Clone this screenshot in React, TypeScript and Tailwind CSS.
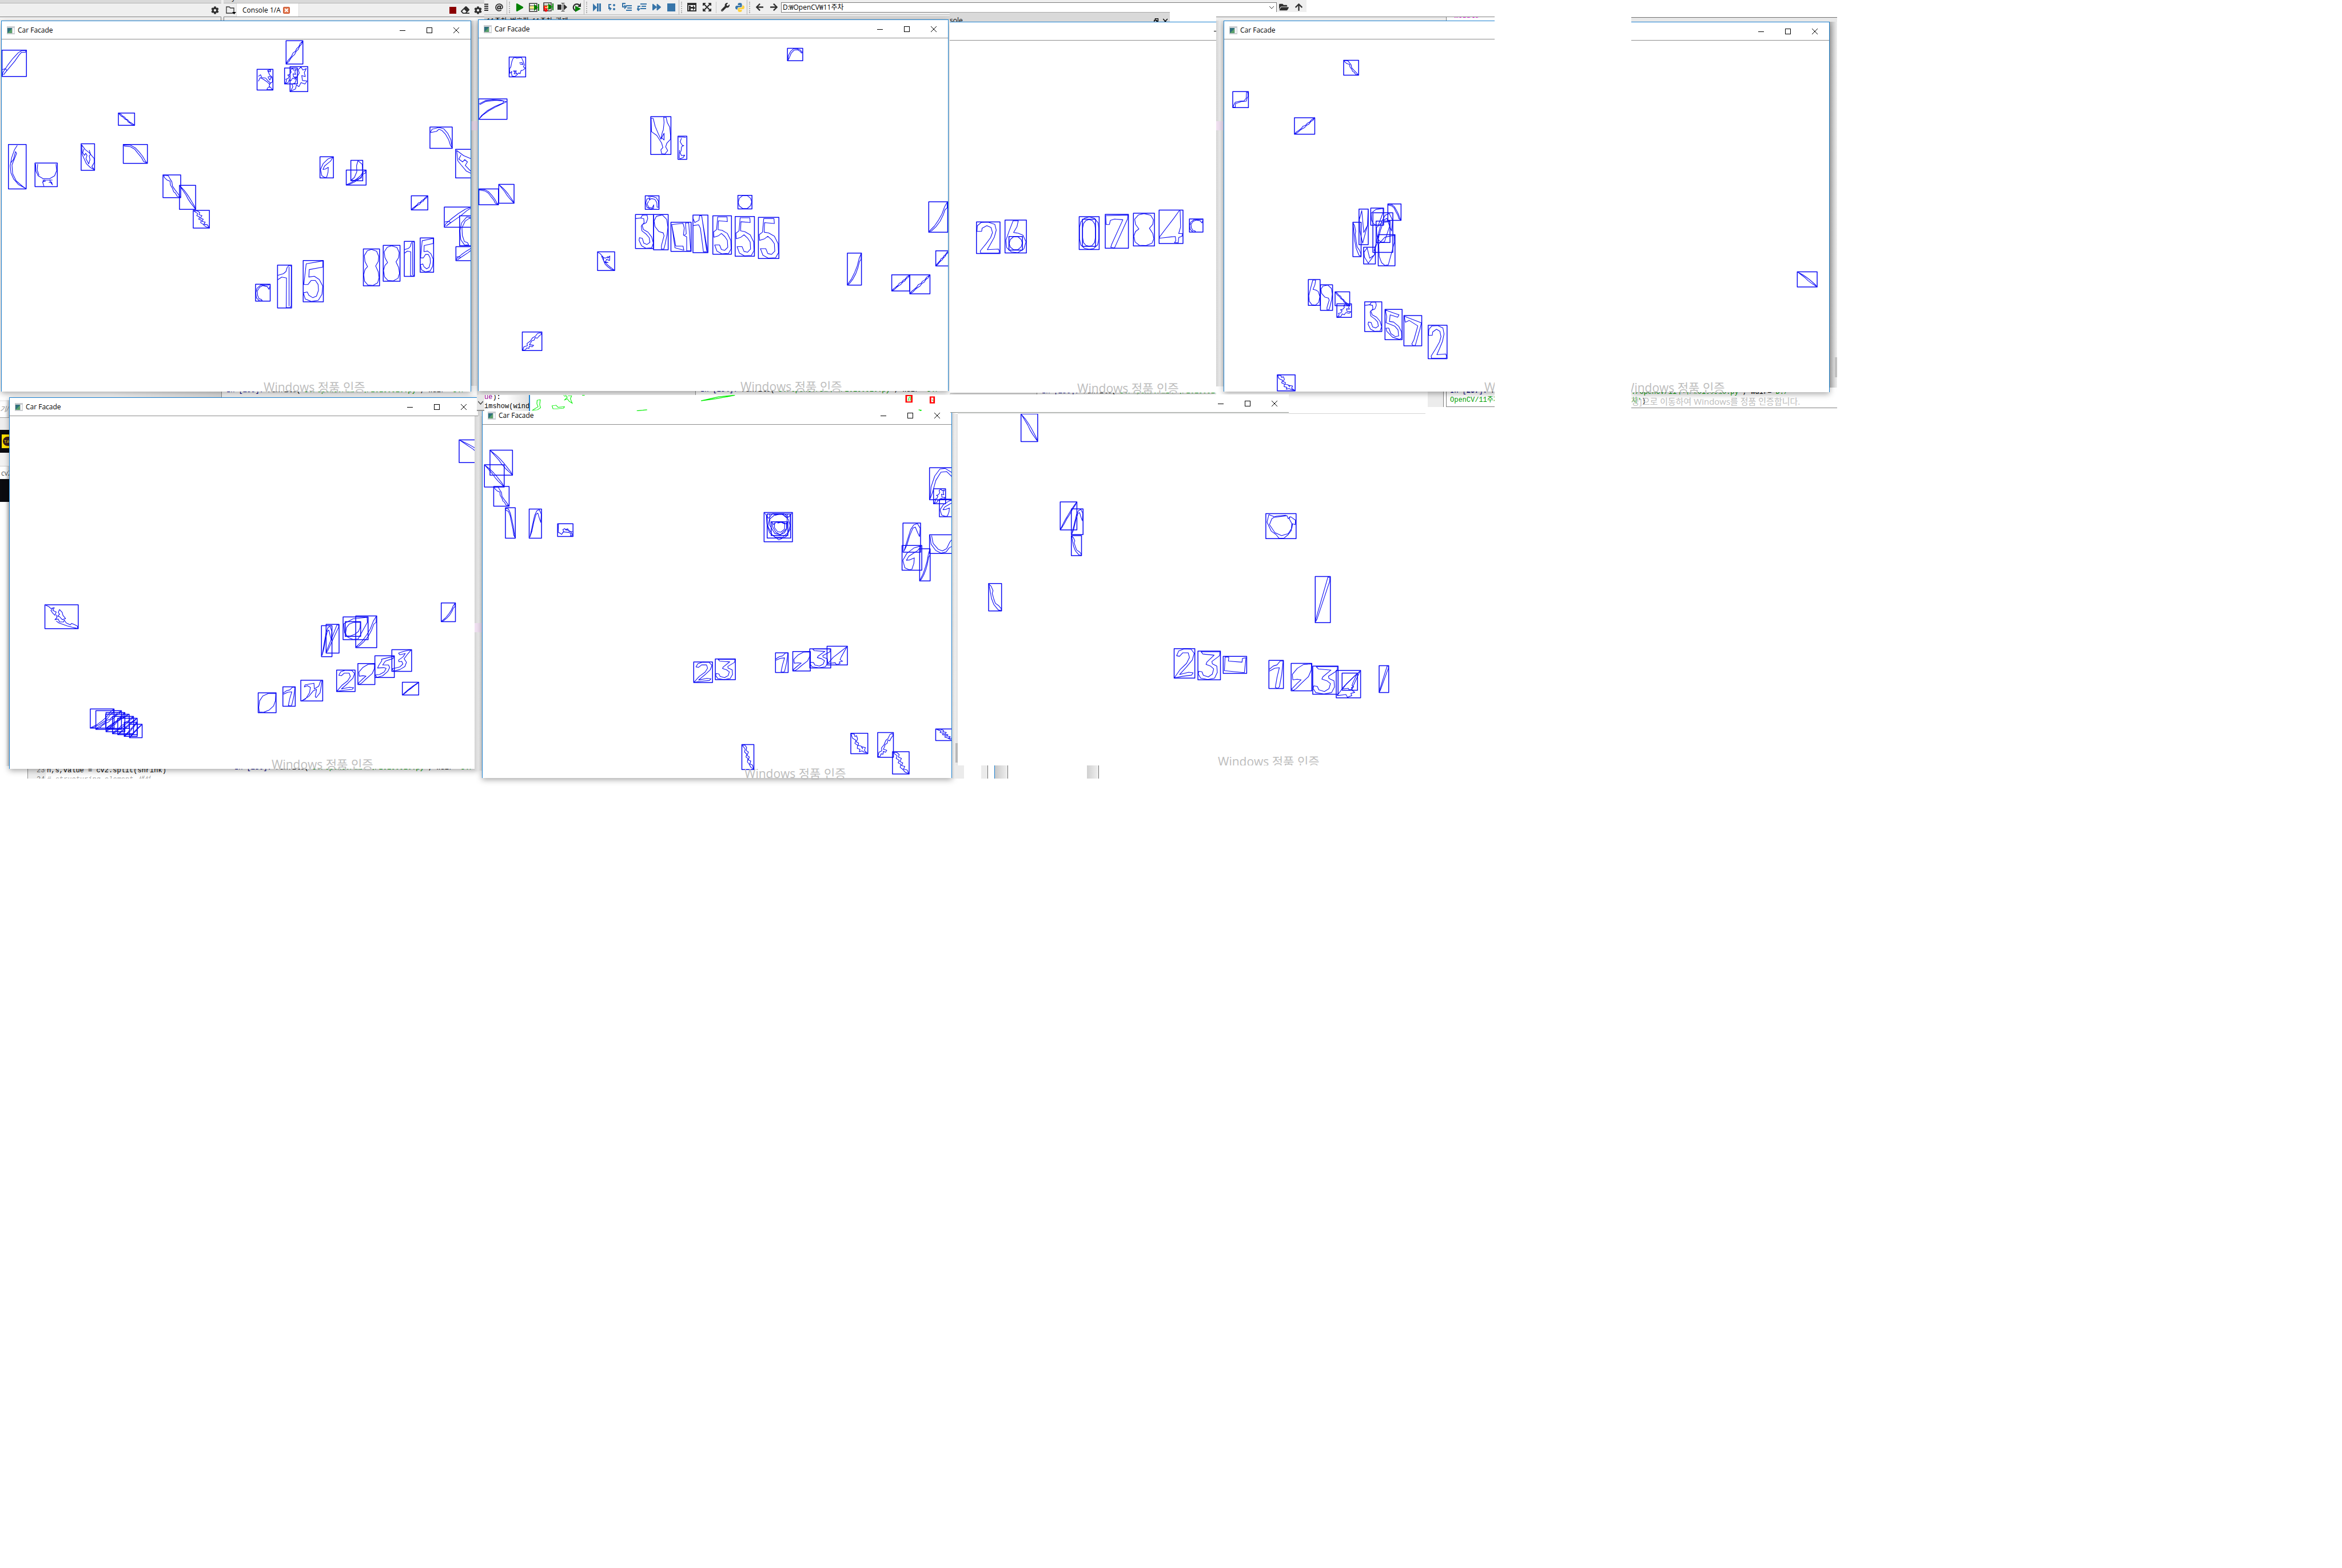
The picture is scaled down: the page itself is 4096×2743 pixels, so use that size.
import type { ReactNode } from "react";
import {
  FaArrowLeft,
  FaArrowRight,
  FaArrowUp,
  FaAt,
  FaCog,
  FaEraser,
  FaFolderOpen,
  FaForward,
  FaPlay,
  FaWrench,
} from "react-icons/fa";

const UI = "font-['Open_Sans','Noto_Sans_CJK_KR',sans-serif]";
const CODE = "font-['Liberation_Mono','Noto_Sans_CJK_KR',monospace] text-xs leading-4 whitespace-pre";

/* Contour traces, each in a 100 x 100 cell that is fitted to its bounding box. */
const T: Record<string, string> = {
  none: "",
  band: "M1 98L4 84L24 56L44 32L66 10L80 2L98 2L96 8L80 8L70 18L52 42L34 62L16 82L6 94M2 74L14 70L20 78L10 88",
  horn: "M2 24L24 8L50 4L78 6L98 14L62 38L36 58L14 80L2 98L10 82L30 58L58 36L86 20L88 10L60 7L26 12L4 28",
  hook: "M88 2L96 4L98 28L90 44L86 60L56 62L34 70L18 74L16 98L2 98L6 86L16 66L44 60L72 58L86 40Z",
  face: "M28 4L40 2L44 6L74 2L84 20L92 40L86 50L98 56L84 66L72 68L66 84L58 80L44 92L34 98L18 96L14 84L16 72L4 82L2 60L10 50L16 24L22 10ZM62 30L78 28L84 38L66 36M26 70L44 70L38 76L48 84L30 84L34 76Z",
  wave: "M6 4L4 66L16 74L26 84L40 60L34 46L46 38L52 48L66 50L80 58L92 74L96 92L84 96L86 76L72 68L54 66L36 64L26 84M50 46L66 40L74 60L98 62",
  barb: "M1 2L16 10L34 30L36 48L54 66L72 80L98 98L80 94L60 80L44 66L34 44L24 24L44 34L62 26L60 34L72 22L70 46L52 40L46 56L62 58L44 52",
  fray: "M2 2L12 8L18 16L28 12L24 24L34 30L30 44L24 36L18 24L24 14M34 42L36 54L30 62L40 60L44 72L56 72L58 64L64 76L76 84L80 78L90 84L98 90L98 99L82 94L66 88L54 82L42 76L34 68M40 32L44 20L52 32L54 44L62 58L52 62L44 50L38 48L44 40Z",
  rise: "M1 99L8 88L20 78L33 66L42 52L55 46L63 34L76 25L84 12L98 2L92 15L80 24L72 38L60 46L50 60L40 66L28 76L16 90Z",
  riseThin: "M1 99L14 82L30 64L44 50L62 32L80 16L98 1L90 12L74 26L56 46L40 60L24 78L10 92Z",
  sweep: "M1 98L30 80L52 60L70 40L84 16L98 1L97 20L86 26L76 44L60 64L38 82L14 96Z",
  lean: "M2 98L4 92L78 8L84 1L97 2L96 10L12 92Z",
  fall: "M1 2L14 8L24 22L38 32L46 48L58 56L68 72L80 80L98 98L84 94L72 82L60 72L52 56L40 50L30 34L16 24Z",
  fallThin: "M1 1L22 22L40 40L54 58L70 74L84 86L99 99L92 86L76 68L62 52L46 36L28 20Z",
  fallBow: "M2 2L30 4L50 18L66 40L80 62L90 84L98 98L84 90L76 70L60 46L48 26L30 12L4 8Z",
  fallSteep: "M4 2L30 4L40 18L50 30L54 50L68 66L82 80L98 98L80 94L70 80L60 74L54 60L42 44L40 28L22 22L8 12Z",
  arcLeft: "M50 2L34 12L18 30L10 48L14 64L30 78L56 90L98 99L80 94L44 82L24 66L20 46L38 28L46 20L40 16L28 34L12 42",
  arcDown: "M2 2L20 10L34 26L28 36L40 56L52 72L76 80L98 92L96 99L74 96L40 76L22 54L12 26Z",
  arcTop: "M2 24L10 10L40 2L62 8L80 30L94 60L99 98L92 86L84 60L70 34L54 16L40 10L30 20L2 26",
  arch: "M2 98L6 60L20 26L40 4L60 2L84 14L98 34M2 98L12 76L24 40L44 14L66 12L84 26L92 38L98 34",
  five: "M15 8L98 1L97 16L30 22L28 40L55 38L80 46L97 62L93 82L75 96L40 99L10 93L1 78L20 76L28 84L48 90L66 86L76 72L74 58L60 48L40 48L24 58L3 58Z",
  fiveB: "M26 3L76 3L78 15L30 13L28 36L50 38L78 46L96 64L98 86L84 98L48 99L22 92L10 76L36 76L46 88L64 90L80 82L78 64L64 54L46 46L30 52L6 56L4 42L20 36Z",
  fiveI: "M34 16L60 10L98 2L94 12L54 24L40 42L70 42L76 54L66 72L40 92L10 99L2 88L24 86L48 74L58 58L46 54L14 56L20 44L36 22Z",
  fiveL: "M2 2L50 12L82 18L74 26L30 18L26 40L50 42L80 56L96 74L98 94L84 99L44 92L10 72L6 62L22 62L34 80L60 90L80 88L76 68L58 56L34 50L6 44L10 24Z",
  one: "M1 24L42 20L60 15L68 6L80 1L98 2L97 95L90 99L62 99L64 30L30 28L2 34M82 4L82 96",
  oneSlim: "M2 32L30 20L56 16L78 2L98 2L88 50L72 94L60 99L44 96L56 60L72 26L40 28L4 38",
  three: "M2 12L30 10L38 2L64 1L68 12L60 24L36 30L44 44L70 52L90 66L99 84L90 98L58 99L34 92L20 76L22 68L38 70L46 84L64 88L80 82L76 68L60 58L36 48L32 34L48 24L46 12L24 10",
  threeS: "M14 2L98 2L96 16L62 36L64 44L84 52L86 74L74 94L44 99L12 94L2 80L4 70L18 72L24 84L46 90L64 80L70 62L56 52L36 46L40 38L72 14L22 10Z",
  threeI: "M34 16L60 8L98 1L80 20L62 42L74 58L66 78L40 92L8 99L2 88L14 86L40 80L56 66L50 54L36 56L34 48L56 34L68 18L40 24Z",
  two: "M2 30L4 12L20 2L50 1L78 8L84 26L76 48L60 70L46 88L94 86L98 96L92 99L18 99L16 92L40 70L60 50L68 34L62 18L44 12L24 20L22 30Z",
  twoS: "M12 24L22 8L48 1L82 2L97 16L88 38L60 62L26 88L70 80L92 82L84 90L40 94L1 99L30 70L60 50L74 30L68 14L42 14L26 26Z",
  seven: "M2 4L98 2L96 14L46 90L40 99L24 97L28 88L76 16L40 14L22 18L18 30L4 30Z",
  sevenL: "M2 2L98 24L90 44L64 98L52 99L44 94L56 80L78 34L30 16L8 22Z",
  nine: "M20 5L60 1L90 14L98 36L92 58L78 86L70 98L54 98L54 88L72 60L66 52L36 48L10 34L4 18Z",
  nineI: "M30 18L60 4L98 2L97 24L84 48L50 72L24 92L10 99L2 94L30 72L48 60L30 58L8 60L6 40Z",
  four: "M84 2L62 24L2 80L2 84L50 80L68 79L70 92L64 97L80 98L82 82L96 78L98 70L82 70L90 50L88 2Z",
  fourI: "M98 2L70 26L30 60L4 92L40 88L46 98L64 92L60 84L76 80L64 72L70 56L98 2",
  six: "M38 2L62 2L56 20L40 38L62 40L84 46L98 66L88 88L60 99L30 97L8 84L4 62L20 32Z",
  eight: "M50 1L82 6L95 20L92 34L76 46L92 62L97 78L88 92L60 99L28 98L8 88L2 70L10 56L26 48L10 34L6 18L24 5Z",
  zero: "M50 1L76 5L94 18L98 34L98 68L92 86L72 97L50 99L26 96L8 86L2 68L2 32L8 16L26 5Z",
  zeroI: "M98 3L96 40L86 66L62 86L30 98L6 96L3 74L8 40L26 16L56 4Z",
  circle: "M34 2L66 2L90 22L98 48L90 76L66 97L34 97L10 78L2 52L10 22Z",
  ring: "M96 4L70 6L36 4L10 24L2 50L6 80L24 97L46 98L40 90L24 86L14 66L12 40L28 18L50 8L80 14L92 30L98 12",
  swirl: "M20 6L50 4L80 14L96 40L98 84L86 84L84 50L70 26L46 20L28 32L36 14L12 24L4 52L12 84L40 98L60 92L62 66L50 90L24 84L14 60L24 40",
  leaf: "M60 2L96 20L99 54L88 86L30 98L4 96L30 84L50 56L48 26Z",
  branch: "M4 98L16 80L10 70L28 66L36 50L24 44L40 40L52 26L46 12L62 2L72 14L92 8L80 24L86 40L66 36L70 56L96 58L84 70L62 64L50 80L36 74L30 90Z",
  branchR: "M8 34L22 26L30 40L54 42L72 58L82 64L80 74L66 62L40 48L20 40L8 58M64 6L86 2L84 12L68 8L80 28L94 36L98 60L82 68L76 82L88 90L98 98L62 98L66 90L80 84M72 34L90 38L80 52L68 36",
  crag: "M1 2L20 4L24 16L34 12L40 28L32 42L46 48L44 60L60 62L70 76L64 66L86 70L80 84L96 96L78 92L66 86L50 90L54 78L38 74L40 58L24 50L30 34L10 24Z",
  cragDown: "M4 4L24 2L40 12L36 24L54 30L44 44L62 50L54 62L74 66L66 78L88 82L98 98L76 92L60 78L46 70L50 56L34 50L40 38L22 30L28 18Z",
  cragUp: "M2 98L8 80L26 74L24 62L40 50L52 32L66 24L78 8L94 4L98 12L88 20L76 34L66 30L60 44L48 48L42 60L36 68L58 72L50 80L36 76L34 88L22 86L16 96Z",
  vee: "M2 4L12 5L22 26L38 46L50 60L58 40L62 36L66 16L64 2L76 2L82 16L94 28L98 50L98 60L80 70L74 80L84 90L70 99L54 98L50 88L60 82L54 70L30 50L4 40ZM50 60L66 44L66 62L54 56",
  bowl: "M3 4L4 34L14 54L36 66L66 66L88 54L97 32L94 4M12 4L10 30L18 52M34 72L78 72M44 70L34 80L40 98M34 80L48 76M66 70L70 82L78 92L74 80L62 82",
  ubend: "M2 4L6 50L24 84L44 98L64 92L76 70L88 60L98 30M8 4L14 46L34 78L50 86L66 74L78 40L98 4",
  tee: "M2 10L12 20L40 14L44 2L58 2L98 98L70 98L50 36L38 26L2 28M60 6L92 96",
  hangul: "M4 8L60 4L66 20L62 44L78 50L78 98L98 98L88 2L72 3L76 40L66 44M4 8L24 82L60 82L64 96L20 88Z",
  hangulS: "M4 99L22 90L40 60L44 34L30 26L16 32L20 22L60 14L62 42L82 28L90 4L97 2L88 60L70 84L66 78L72 44L58 50L36 78Z",
  bracket: "M24 4L22 28L80 34L82 12L97 8L90 96L5 84L8 4L24 4",
  lens: "M96 2L97 24L60 97L40 99L20 90L6 70L3 30L40 8Z",
  fold: "M2 22L8 60L40 96L97 40L98 4L92 46L52 66L30 4L4 30Z",
  shell: "M4 4L30 22L60 34L97 56L98 70L80 86L98 98L70 90L40 76L20 54L8 40ZM20 20L12 34L26 44L34 36L44 44L36 56L46 66L56 76L66 60L60 46L70 40L60 24",
  wisp: "M6 4L60 4L90 6M40 8L24 24L50 40L66 40L40 46L36 62L24 72L40 84L76 82L60 92L24 98L14 94L18 60",
  loop: "M6 96L24 60L44 22L62 6L82 2L98 18L94 46L84 34L70 14L56 18L38 44L22 76Z",
  curl: "M96 2L60 10L24 32L4 60L14 90L36 98L50 96L60 72L62 50L40 58L22 60L34 44L60 30L80 20Z",
  cup: "M8 8L10 40L28 76L52 94L78 82L92 56L92 6M20 6L20 44L38 72L58 76L80 54L82 6M2 2L16 20L30 4L70 4L86 16L98 2M38 10L60 4L84 18",
  halo: "M10 4L32 14L70 8L74 20L82 12L98 26L97 44L86 40L84 68L74 84L60 98L44 99L34 84L18 70L4 34ZM20 20L34 10L66 6M20 20L12 44L30 76L52 88L74 80L86 58L88 44L78 22L78 12",
};

type Mark = [number, number, number, number, string];

function Traces({ view, marks }: { view: [number, number, number, number]; marks: Mark[] }) {
  const [x0, y0, x1, y1] = view;
  return (
    <svg
      className="block h-full w-full"
      viewBox={`${x0} ${y0} ${x1 - x0} ${y1 - y0}`}
      preserveAspectRatio="none"
      fill="none"
      stroke="#0c0cf4"
      strokeLinejoin="round"
      aria-hidden="true"
    >
      {marks.map(([a, b, c, d, shape], i) => (
        <g key={i}>
          <rect x={a} y={b} width={c - a} height={d - b} strokeWidth="1.5" vectorEffect="non-scaling-stroke" />
          <path
            d={T[shape]}
            transform={`translate(${a} ${b}) scale(${(c - a) / 100} ${(d - b) / 100})`}
            strokeWidth="1.1"
            vectorEffect="non-scaling-stroke"
          />
        </g>
      ))}
    </svg>
  );
}

const facade1: Mark[] = [
  [7, 197, 87, 300, "band"], [937, 160, 992, 251, "rise"], [842, 272, 894, 353, "branchR"],
  [932, 267, 974, 329, "branch"], [950, 261, 1008, 359, "branch"], [388, 443, 441, 491, "fall"],
  [28, 566, 86, 740, "arcLeft"], [115, 639, 188, 731, "bowl"], [266, 563, 310, 667, "shell"],
  [404, 566, 483, 640, "fallBow"], [534, 685, 592, 774, "fallSteep"], [588, 726, 641, 820, "fallThin"],
  [633, 824, 686, 893, "cragDown"], [1048, 614, 1092, 697, "curl"], [1149, 628, 1188, 708, "leaf"],
  [1134, 666, 1199, 725, "sweep"], [1347, 767, 1401, 822, "rise"], [1408, 498, 1481, 581, "arcTop"],
  [1492, 585, 1580, 697, "shell"], [1455, 811, 1560, 890, "band"], [1505, 845, 1570, 962, "ring"],
  [1493, 966, 1570, 1021, "band"], [837, 1113, 885, 1179, "ring"], [909, 1038, 955, 1206, "one"],
  [993, 1020, 1059, 1182, "five"], [1190, 975, 1243, 1119, "eight"], [1255, 961, 1310, 1101, "eight"],
  [1324, 945, 1357, 1082, "one"], [1376, 932, 1420, 1066, "five"],
];

const facade2: Mark[] = [
  [115, 225, 169, 303, "face"], [1025, 191, 1075, 240, "arch"], [15, 389, 108, 469, "horn"],
  [578, 458, 644, 606, "vee"], [667, 535, 696, 625, "wisp"], [16, 741, 80, 803, "fallBow"],
  [81, 723, 131, 797, "fallThin"], [560, 768, 605, 821, "swirl"], [863, 766, 909, 819, "circle"],
  [528, 841, 587, 974, "three"], [587, 841, 635, 979, "nine"], [644, 871, 710, 985, "hangul"],
  [716, 843, 765, 990, "tee"], [781, 846, 842, 996, "fiveB"], [854, 849, 917, 1004, "fiveB"],
  [930, 852, 997, 1013, "fiveB"], [404, 987, 460, 1060, "barb"], [1221, 992, 1267, 1117, "sweep"],
  [1366, 1077, 1425, 1140, "rise"], [1425, 1077, 1491, 1151, "rise"], [1487, 791, 1549, 910, "sweep"],
  [1510, 983, 1552, 1042, "rise"], [158, 1300, 222, 1373, "cragUp"],
];

const facade3: Mark[] = [
  [92, 851, 158, 972, "two"], [172, 844, 232, 970, "six"], [183, 907, 221, 959, "circle"],
  [380, 831, 436, 957, "zero"], [389, 841, 426, 945, "zero"], [453, 822, 518, 952, "seven"],
  [532, 818, 591, 943, "eight"], [604, 806, 671, 934, "four"], [689, 840, 727, 890, "ring"],
];

const facade4: Mark[] = [
  [1122, 231, 1164, 288, "fallSteep"], [811, 351, 855, 412, "hook"], [984, 451, 1041, 514, "rise"],
  [1246, 781, 1283, 844, "fallBow"], [1165, 801, 1191, 937, "fold"], [1198, 797, 1234, 863, "lens"],
  [1204, 815, 1260, 967, "loop"], [1213, 847, 1252, 929, "lens"], [1148, 851, 1171, 983, "arcDown"],
  [1178, 947, 1211, 1011, "fold"], [1219, 899, 1266, 1018, "lens"], [1023, 1071, 1056, 1170, "six"],
  [1057, 1091, 1091, 1189, "nine"], [1098, 1118, 1139, 1171, "fall"], [1103, 1164, 1144, 1216, "branch"],
  [1181, 1156, 1229, 1270, "three"], [1238, 1185, 1286, 1301, "fiveL"], [1291, 1209, 1341, 1325, "sevenL"],
  [1359, 1246, 1412, 1374, "two"], [936, 1436, 986, 1497, "crag"],
];

const facade5: Mark[] = [[1396, 1018, 1474, 1075, "fallThin"]];

const facade6: Mark[] = [
  [1489, 197, 1600, 288, "fallThin"], [147, 858, 255, 954, "fray"], [1431, 851, 1477, 926, "sweep"],
  [1043, 942, 1077, 1066, "loop"], [1058, 937, 1100, 1052, "lean"], [1113, 907, 1194, 998, "lens"],
  [1120, 926, 1170, 985, "zeroI"], [1154, 903, 1222, 1030, "sweep"], [1271, 1038, 1335, 1125, "threeI"],
  [1216, 1063, 1279, 1150, "fiveI"], [1161, 1094, 1216, 1178, "nineI"], [1092, 1120, 1152, 1206, "twoS"],
  [976, 1161, 1047, 1244, "hangulS"], [918, 1187, 958, 1265, "oneSlim"], [838, 1211, 896, 1291, "zeroI"],
  [1305, 1169, 1358, 1220, "riseThin"], [294, 1276, 371, 1353, "sweep"], [312, 1283, 395, 1358, "rise"],
  [345, 1290, 406, 1367, "rise"], [344, 1297, 420, 1354, "riseThin"], [366, 1306, 434, 1375, "rise"],
  [383, 1313, 446, 1379, "riseThin"], [404, 1329, 446, 1386, "rise"], [421, 1337, 462, 1391, "riseThin"],
];

const facade7: Mark[] = [
  [52, 242, 125, 342, "fallThin"], [34, 300, 98, 389, "fallThin"], [64, 387, 114, 466, "fallSteep"],
  [102, 472, 134, 594, "fallBow"], [179, 477, 219, 594, "loop"], [271, 536, 321, 587, "wave"],
  [940, 491, 1032, 608, "cup"], [950, 497, 1026, 593, "circle"], [963, 528, 1017, 583, "cup"],
  [1476, 312, 1560, 440, "arch"], [1489, 396, 1528, 456, "branch"], [1508, 438, 1560, 508, "curl"],
  [1390, 533, 1447, 650, "loop"], [1387, 623, 1451, 722, "curl"], [1444, 636, 1478, 765, "sweep"],
  [1476, 580, 1560, 655, "ubend"], [712, 1089, 773, 1171, "twoS"], [782, 1077, 847, 1160, "threeS"],
  [977, 1052, 1018, 1131, "oneSlim"], [1033, 1047, 1090, 1125, "nineI"], [1088, 1036, 1156, 1113, "threeS"],
  [1144, 1026, 1210, 1101, "fourI"], [868, 1419, 907, 1519, "cragDown"], [1221, 1374, 1276, 1456, "crag"],
  [1308, 1371, 1359, 1470, "cragUp"], [1356, 1448, 1410, 1537, "cragDown"], [1496, 1357, 1560, 1403, "cragDown"],
];

const facade8: Mark[] = [
  [235, 94, 289, 205, "fallThin"], [362, 447, 416, 559, "riseThin"], [398, 475, 436, 578, "loop"],
  [398, 582, 431, 662, "arcDown"], [130, 774, 172, 884, "arcDown"], [1028, 494, 1126, 594, "halo"],
  [1188, 746, 1237, 931, "lean"], [731, 1035, 798, 1153, "twoS"], [808, 1045, 881, 1160, "threeS"],
  [890, 1066, 966, 1134, "bracket"], [1038, 1082, 1085, 1195, "oneSlim"], [1110, 1094, 1177, 1204, "nineI"],
  [1180, 1105, 1262, 1218, "threeS"], [1256, 1122, 1335, 1232, "fourI"], [1275, 1133, 1325, 1202, "fourI"],
  [1395, 1103, 1426, 1211, "lean"],
];

function AppIcon() {
  return (
    <svg className="h-4 w-4" viewBox="0 0 16 16" aria-hidden="true">
      <rect x="1" y="1" width="14" height="14" fill="#c9ccd0" />
      <rect x="2" y="4" width="8" height="9" fill="#2f6f7c" />
      <path d="M2 13L10 5V13Z" fill="#5aa06a" />
      <rect x="11" y="4" width="3" height="9" fill="#f4f6f8" />
    </svg>
  );
}

function Controls() {
  const cell = "flex h-full w-[47px] items-center justify-center";
  return (
    <div className="flex h-full pr-0.5">
      <button className={cell} aria-label="Minimize">
        <svg width="10" height="10" stroke="#000" aria-hidden="true"><path d="M0 5.5H10" /></svg>
      </button>
      <button className={cell} aria-label="Maximize">
        <svg width="10" height="10" fill="none" stroke="#000" aria-hidden="true"><rect x=".5" y=".5" width="9" height="9" /></svg>
      </button>
      <button className={cell} aria-label="Close">
        <svg width="10" height="10" stroke="#000" aria-hidden="true"><path d="M0 0L10 10M10 0L0 10" /></svg>
      </button>
    </div>
  );
}

function Watermark({ place }: { place: string }) {
  return (
    <p className={`pointer-events-none absolute ${place} ${UI} text-[21px] leading-6 whitespace-nowrap text-[#bdbdbd]`}>
      Windows 정품 인증
    </p>
  );
}

function FacadeWindow({
  frame, title = true, controls = true, mark, children,
}: {
  frame: string; title?: boolean; controls?: boolean; mark?: string; children: ReactNode;
}) {
  return (
    <section
      className={`absolute flex flex-col border-[#1a80d0] bg-white shadow-[0_3px_10px_rgba(0,0,0,0.35)] ${frame}`}
      aria-label="Car Facade"
    >
      <header className="flex h-8 shrink-0 items-center justify-between border-b border-[#8c8c8c] pl-2">
        {title ? (
          <div className="flex items-center gap-1">
            <AppIcon />
            <h2 className={`${UI} text-xs leading-4 whitespace-nowrap text-black`}>Car Facade</h2>
          </div>
        ) : (
          <span />
        )}
        {controls && <Controls />}
      </header>
      <div className="min-h-0 flex-1">{children}</div>
      {mark && <Watermark place={mark} />}
    </section>
  );
}

function RunLine({ n, tail = "20190910.py" }: { n: string; tail?: string }) {
  return (
    <p className={`${CODE} text-black`}>
      <span className="text-[#000080]">In [<b>{n}</b>]:</span> runfile(
      <span className="text-[#00a000]">'D:/OpenCV/11주차/{tail}'</span>, wdir=
      <span className="text-[#00a000]">'D:/</span>
    </p>
  );
}

function Tool({ label, wide, children }: { label: string; wide?: boolean; children: ReactNode }) {
  return (
    <button
      aria-label={label}
      className={`flex h-full shrink-0 items-center justify-center ${wide ? "w-[26px]" : "w-[25px]"}`}
    >
      {children}
    </button>
  );
}

function Grip() {
  return (
    <div className="flex h-full shrink-0 items-center gap-[3px] pr-1">
      <span className="h-full w-px bg-[#b4b4b4]" />
      <span className="h-5 border-l-2 border-dotted border-[#b0b0b0]" />
    </div>
  );
}

const blue = "#3775a9";

function Toolbar() {
  return (
    <div className="absolute top-0 left-[847px] flex h-[26px] w-[1438px] items-center border-b border-[#b4b4b4] bg-[#efefef] text-[#2f2f2f]">
      <button aria-label="Outline" className="w-2 shrink-0">
        <svg width="8" height="14" stroke="#2f2f2f" strokeWidth="2" aria-hidden="true"><path d="M0 1.5H7M0 5H7M0 8.500H7M0 12H7" /></svg>
      </button>
      <button aria-label="Find symbols" className="flex w-[31px] shrink-0 justify-center pl-1"><FaAt size={14} /></button>
      <Grip />
      <Tool label="Run file"><FaPlay size={14} color="#008000" /></Tool>
      <Tool label="Run cell">
        <svg width="18" height="16" aria-hidden="true">
          <path d="M1 1H14V15H1Z" fill="#fff" stroke="#333" strokeWidth="1.500" /><path d="M1 5H14V11H1Z" fill="#fbf08a" stroke="#333" />
          <path d="M9 2L16 8L9 14ZM16 2H18V14H16Z" fill="#008000" />
        </svg>
      </Tool>
      <Tool label="Run cell and advance">
        <svg width="18" height="17" aria-hidden="true">
          <path d="M1 1H14V15H1Z" fill="#fff" stroke="#333" strokeWidth="1.500" /><path d="M1 5H14V11H1Z" fill="#fbf08a" stroke="#333" />
          <path d="M9 2L16 8L9 14ZM16 2H18V14H16Z" fill="#008000" />
          <path d="M7 7.500H2V13.500H5M4 10.500L7 13.500L4 16.500" fill="none" stroke="#f00" strokeWidth="2" />
        </svg>
      </Tool>
      <Tool label="Run selection">
        <svg width="17" height="15" fill="#2f2f2f" aria-hidden="true"><path d="M0 3H7V12H0ZM11 2L17 7.500L11 13Z" /><path d="M6.500 .5H12.500M6.500 14.500H12.500M9.500 .5V14.500" stroke="#2f2f2f" /></svg>
      </Tool>
      <Tool label="Re-run last script">
        <svg width="16" height="16" aria-hidden="true"><path d="M7 14A6 6 0 1 1 13 5" fill="none" stroke="#2f2f2f" strokeWidth="2.200" /><path d="M15 0V7H9Z" fill="#2f2f2f" /><path d="M5 5L15 10.500L5 16Z" fill="#008000" /></svg>
      </Tool>
      <Grip />
      <Tool wide label="Debug file"><svg width="14" height="14" fill={blue} aria-hidden="true"><path d="M0 0L7 7L0 14ZM7 0H10V14H7ZM11 0H14V14H11Z" /></svg></Tool>
      <Tool wide label="Step"><svg width="14" height="14" fill={blue} aria-hidden="true"><path d="M6 1H1V10H3V13L7 9L3 6V8H3V3H6Z" /><circle cx="11" cy="3" r="2" /><circle cx="11" cy="10" r="2" /></svg></Tool>
      <Tool wide label="Step into"><svg width="17" height="15" fill="none" stroke={blue} strokeWidth="2" aria-hidden="true"><path d="M6 1H1V7H5M7 5H17M9 9H17M7 13H17M4 4L7 7L4 10" /></svg></Tool>
      <Tool wide label="Step return"><svg width="17" height="15" fill="none" stroke={blue} strokeWidth="2" aria-hidden="true"><path d="M6 2H17M8 6H16M6 10H16M6 6H2V13M0 10L2.500 13L5 10" /></svg></Tool>
      <Tool wide label="Continue"><FaForward size={15} color={blue} /></Tool>
      <Tool wide label="Stop"><span className="h-3.5 w-3.5 bg-[#3775a9]" /></Tool>
      <Grip />
      <Tool wide label="Maximize pane">
        <svg width="16" height="15" aria-hidden="true"><path d="M1 1H15V14H1Z" fill="#fff" stroke="#2f2f2f" strokeWidth="2" /><path d="M1 1H15V4H1ZM3 5H6V13H3Z" fill="#2f2f2f" /><path d="M6 7H10V4L14 9L10 13V10H6Z" fill="#2f2f2f" /></svg>
      </Tool>
      <Tool wide label="Fullscreen">
        <svg width="15" height="15" fill="#2f2f2f" stroke="#2f2f2f" aria-hidden="true"><path d="M2 2L13 13M13 2L2 13" strokeWidth="2" /><path d="M.5.5H5L.5 5ZM14.500.5V5L10 .5ZM.5 14.500V10L5 14.500ZM14.500 14.500H10L14.500 10Z" /></svg>
      </Tool>
      <span className="mx-[3px] h-5 w-px shrink-0 bg-[#c8c8c8]" />
      <Tool label="Preferences"><FaWrench size={15} /></Tool>
      <Tool label="Python path">
        <svg width="16" height="16" viewBox="0 0 16 16" aria-hidden="true">
          <path d="M8 0C5 0 4.500 1 4.500 2.500V4H8.500V5H2.500C.8 5 0 6.500 0 8.300C0 10.300 1 11.500 2.500 11.500H3.800V9.500C3.800 8.200 5 7.500 6 7.500H10C11 7.500 11.500 6.500 11.500 5.500V2.500C11.500 .8 10 0 8 0Z" fill={blue} />
          <path d="M8 16C11 16 11.500 15 11.500 13.500V12H7.500V11H13.500C15.200 11 16 9.500 16 7.700C16 5.700 15 4.500 13.500 4.500H12.200V6.500C12.200 7.800 11 8.500 10 8.500H6C5 8.500 4.500 9.500 4.500 10.500V13.500C4.500 15.200 6 16 8 16Z" fill="#ffd23f" />
        </svg>
      </Tool>
      <Grip />
      <Tool label="Back"><FaArrowLeft size={15} /></Tool>
      <Tool label="Forward"><FaArrowRight size={15} /></Tool>
      <div className="flex h-[18px] min-w-0 flex-1 items-center border border-[#7a7a7a] bg-white pr-1">
        <input
          aria-label="Working directory"
          className={`${UI} h-4 w-full min-w-0 px-0.5 text-xs leading-4 text-black outline-none`}
          defaultValue="D:₩OpenCV₩11주차"
        />
        <svg width="8" height="6" fill="none" stroke="#333" aria-hidden="true"><path d="M0 1L4 5L8 1" /></svg>
      </div>
      <button aria-label="Browse directory" className="flex w-6 shrink-0 justify-center"><FaFolderOpen size={17} /></button>
      <button aria-label="Parent directory" className="flex w-7 shrink-0 justify-center"><FaArrowUp size={15} /></button>
    </div>
  );
}

function ConsoleTabs() {
  return (
    <div className="absolute top-0 left-0 flex h-9 w-[847px] gap-1 overflow-hidden bg-[#efefef] text-[#2f2f2f]">
      <div className="flex w-[387px] flex-col">
        <div className="h-1.5 shrink-0 border-b border-[#b4b4b4] bg-[#d9d9d9]" />
        <div className="flex h-6 shrink-0 items-center justify-end border-b border-[#808080] pr-1">
          <button aria-label="Editor options"><FaCog size={14} /></button>
        </div>
        <div className="h-2 border-r border-[#808080] bg-[#f6f6f6]" />
      </div>
      <div className="flex flex-1 flex-col">
        <div className="h-1.5 shrink-0 overflow-hidden border-b border-[#b4b4b4] bg-[#d9d9d9]">
          <p className={`-mt-2.5 pl-1 ${UI} text-xs leading-3 text-black`}>IPython console</p>
        </div>
        <div className="flex h-6 shrink-0 items-center border-b border-[#808080] pl-1">
          <button aria-label="Browse tabs">
            <svg width="18" height="15" fill="none" stroke="#2f2f2f" strokeWidth="1.300" aria-hidden="true"><path d="M1 13V2H6L8 4H14V13Z" /><path d="M11 11H18L14.500 15Z" fill="#000" stroke="none" /></svg>
          </button>
          <div className="flex h-full w-[110px] items-center gap-1 border-x border-[#dcdcdc] bg-white pl-2.5">
            <span className={`${UI} text-xs leading-4 whitespace-nowrap text-black`}>Console 1/A</span>
            <button aria-label="Close tab" className="flex h-3 w-3 shrink-0 items-center justify-center rounded-[2px] border border-[#c8502c] bg-[#e07850]">
              <svg width="6" height="6" stroke="#fff" strokeWidth="2" aria-hidden="true"><path d="M0 0L6 6M6 0L0 6" /></svg>
            </button>
          </div>
          <div className="flex flex-1 items-center justify-end gap-2 pr-1">
            <button aria-label="Interrupt kernel" className="h-3 w-3 bg-[#8b0000]" />
            <button aria-label="Clear console"><FaEraser size={15} /></button>
            <button aria-label="Console options"><FaCog size={14} /></button>
          </div>
        </div>
        <div className="h-2 border-l border-[#808080] bg-[#f8f8f8]" />
      </div>
    </div>
  );
}

function Gap({ place, note }: { place: string; note: string }) {
  return (
    <div className={`absolute overflow-hidden bg-gradient-to-r from-[#d2d2d2] via-[#eeeeee] to-[#e2e2e2] ${place}`}>
      <div className={`absolute h-4 w-full bg-[#efdff0] ${note}`} />
    </div>
  );
}

export default function App() {
  return (
    <main className="relative min-h-screen w-full overflow-hidden bg-white">
      <ConsoleTabs />
      <Toolbar />
      {/* dock title below the toolbar, cut off by the windows */}
      <div className="absolute top-[27px] left-[847px] h-2 w-[814px] overflow-hidden bg-[#d9d9d9]">
        <p className={`mt-0.5 pl-1 ${UI} text-xs leading-4 text-black`}>11주차_번호판_11주차_과제</p>
      </div>
      <div className="absolute top-[21px] left-[1661px] h-[19px] w-[630px] overflow-hidden bg-white">
        <div className="flex h-5 w-[385px] items-start justify-between border-t border-[#a8a8a8] bg-[#d9d9d9] pt-1.5">
          <p className={`${UI} text-xs leading-4 text-black`}>sole</p>
          <div className="flex gap-2 pt-1 pr-1">
            <button aria-label="Undock"><svg width="8" height="9" fill="none" stroke="#000" aria-hidden="true"><path d="M2.500 3V.5H7.500V5H5M.5 3.500H5V8.500H.5Z" strokeWidth="1.500" /></svg></button>
            <button aria-label="Close pane"><svg width="8" height="9" stroke="#000" strokeWidth="1.500" aria-hidden="true"><path d="M0 1L8 9M8 1L0 9" /></svg></button>
          </div>
        </div>
      </div>

      <div className="absolute top-[29px] left-[2127px] flex h-2 w-[487px] justify-end overflow-hidden border-t border-[#808080] bg-[#ececec]">
        <p className={`-mt-2.5 w-[85px] border-l border-[#808080] bg-white pl-1.5 ${CODE} text-[#e000e0]`}>{"<module>"}</p>
      </div>
      <div className="absolute top-[30px] left-[2853px] h-2 w-[360px] border-t border-[#707070] bg-[#e8e8e8]" />
      <div className="absolute top-[38px] left-[3200px] h-[675px] w-[13px] bg-gradient-to-r from-[#b8b8b8] to-[#efefef]">
        <div className="absolute top-[587px] right-0 h-[35px] w-1 bg-[#c2c2c2]" />
      </div>

      <Gap place="left-[824px] top-[36px] h-[660px] w-[13px]" note="top-[176px]" />
      <Gap place="left-[2127px] top-[36px] h-[650px] w-[13px]" note="top-[176px]" />

      {/* console lines that show between the rows of windows */}
      <div className="absolute top-[675px] left-0 flex h-5 w-[834px] overflow-hidden bg-white">
        <div className="w-[388px] shrink-0 border-r border-[#909090] bg-gradient-to-r from-white via-white to-[#e4e4e4]" />
        <div className="flex-1 pl-2"><RunLine n="255" /></div>
      </div>
      <div className="absolute top-[674px] left-[837px] flex h-[17px] w-[824px] overflow-hidden bg-white">
        <div className="w-[380px] shrink-0 border-r border-[#909090] bg-[#f0f0f0]" />
        <div className="flex-1 pl-2"><RunLine n="254" /></div>
      </div>
      <div className="absolute top-[677px] left-[1662px] flex h-[15px] w-[465px] overflow-hidden bg-white">
        <div className="w-[152px] shrink-0 border-r border-[#909090] bg-[#f0f0f0]" />
        <div className="flex-1 pl-2"><RunLine n="256" /></div>
      </div>

      <FacadeWindow frame="left-[2px] top-[36px] h-[649px] w-[822px] border-x border-t" mark="left-[458px] -bottom-[4px]">
        <Traces view={[6, 155, 1541, 1533]} marks={facade1} />
      </FacadeWindow>
      <FacadeWindow frame="left-[836px] top-[34px] h-[650px] w-[823px] border-x border-t" mark="left-[458px] -bottom-[4px]">
        <Traces view={[15, 152, 1550, 1531]} marks={facade2} />
      </FacadeWindow>

      <div className="absolute top-[38px] left-[1661px] h-[653px] w-[466px] overflow-hidden">
        <FacadeWindow frame="left-0 top-0 h-[649px] w-[466px] border-t" title={false} controls={false} mark="left-[223px] -bottom-[4px]">
          <Traces view={[17, 157, 764, 1505]} marks={facade3} />
        </FacadeWindow>
        <span className="absolute top-[16px] right-0 h-px w-1 bg-black" />
      </div>

      {/* fourth screenshot, left part */}
      <div className="absolute top-[36px] left-[2127px] h-[680px] w-[487px] overflow-hidden">
        <div className="absolute right-0 bottom-0 flex h-10 w-full flex-row justify-end bg-white pb-1">
          <div className="w-7 border-r border-[#808080] bg-[#ececec]" />
          <div className="ml-1 w-[85px] border-b border-l border-[#808080] pl-1.5">
            <p className={`${CODE} text-black`}><span className="text-[#000080]">In [<b>257</b>]:</span> runfile</p>
            <p className={`${CODE} text-[#00a000]`}>OpenCV/11주차</p>
          </div>
        </div>
        <FacadeWindow frame="left-[13px] top-0 h-[649px] w-[822px] border-l border-t" controls={false} mark="left-[455px] -bottom-[4px]">
          <div className="h-full w-[474px]"><Traces view={[787, 151, 1547, 1500]} marks={facade4} /></div>
        </FacadeWindow>
      </div>
      {/* fourth screenshot, right part */}
      <div className="absolute top-[38px] left-[2853px] h-[679px] w-[360px] overflow-hidden">
        <div className="absolute bottom-[3px] left-0 h-9 w-[360px] border-b border-[#808080] bg-white">
          <div className="-ml-[144px]"><RunLine n="257" /></div>
          <p className={`${CODE} text-[#00a000]`}>차'<span className="text-black">)</span></p>
          <p className={`absolute top-[14px] left-0 ${UI} text-[15px] leading-5 whitespace-nowrap text-[#bdbdbd]`}>정]으로 이동하여 Windows를 정품 인증합니다.</p>
        </div>
        <FacadeWindow frame="right-[13px] top-0 h-[648px] w-[347px] border-r border-t" title={false} mark="-left-[14px] -bottom-[4px]">
          <Traces view={[744, 152, 1521, 1469]} marks={facade5} />
        </FacadeWindow>
      </div>

      {/* slice of the desktop left of the lower window */}
      <div className="absolute top-[700px] left-0 flex h-[650px] w-[17px] flex-col overflow-hidden bg-white shadow-[inset_-4px_0_4px_rgba(0,0,0,0.2)]">
        <p className={`h-[30px] pt-2 ${UI} text-xs leading-4 text-[#909090] italic`}>기/</p>
        <div className="h-[22px] border-t border-[#a0a0a0] bg-[#eeeeee]" />
        <div className="flex h-10 items-center justify-end bg-[#0b0b10]">
          <div className="flex h-6 w-3.5 items-center overflow-hidden bg-[#ffe000] pl-0.5">
            <span className={`block h-4 w-6 shrink-0 rounded-full bg-[#3b1e1e] pl-0.5 ${UI} text-[8px] leading-4 text-[#ffe000]`}>TALK</span>
          </div>
        </div>
        <div className="h-6 border-b border-[#cccccc] bg-[#f2f2f2]" />
        <p className={`h-[22px] pl-0.5 ${UI} text-xs leading-6 text-[#555]`}>cv2</p>
        <div className="h-10 bg-[#0b0b10]" />
      </div>

      {/* editor lines below the lower window */}
      <div className="absolute top-[1340px] left-0 flex h-[22px] w-[830px] overflow-hidden bg-white">
        <div className="ml-12 w-8 shrink-0 border-l border-[#909090] bg-[#efefef]">
          <p className={`${CODE} pl-[15px] text-[#777]`}>23{"\n"}24</p>
        </div>
        <p className={`${CODE} w-[330px] shrink-0 pl-0.5 text-black`}>
          h,s,value = cv2.split(shrink){"\n"}
          <i className="text-[#a0a0a0]"># structuring element 생성</i>
        </p>
        <div className="-mt-[5px] min-w-0 flex-1"><RunLine n="236" /></div>
      </div>
      <FacadeWindow frame="left-[16px] top-[695px] h-[650px] w-[820px] border-l border-t" mark="left-[458px] -bottom-[4px]">
        <div className="h-full w-[813px]"><Traces view={[33, 102, 1539, 1516]} marks={facade6} /></div>
      </FacadeWindow>
      <Gap place="left-[830px] top-[728px] h-[620px] w-[14px]" note="top-[362px]" />

      <FacadeWindow frame="left-[843px] top-[711px] h-[650px] w-[822px] border-x" mark="left-[458px] -bottom-[4px]">
        <Traces view={[28, 140, 1547, 1553]} marks={facade7} />
      </FacadeWindow>
      {/* code strip that overlaps the top of the middle window */}
      <div className="absolute top-[691px] left-[834px] flex h-[28px] w-[841px] overflow-hidden bg-white">
        <div className="flex w-[13px] shrink-0 items-center justify-center border-b-2 border-[#909090] bg-[#e6e6e6]">
          <svg width="9" height="7" fill="none" stroke="#444" strokeWidth="1.500" aria-hidden="true"><path d="M0 1L4.500 6L9 1" /></svg>
        </div>
        <div className="w-[80px] shrink-0 overflow-hidden border-r-2 border-[#1a80d0] bg-gradient-to-r from-white via-white to-[#dedede]">
          <p className={`${CODE} -mt-1 text-black`}><span className="text-[#900090]">ue</span>):</p>
          <p className={`${CODE} text-black`}>imshow(wind</p>
        </div>
        <svg className="h-full min-w-0 flex-1" viewBox="182 19 1378 64" preserveAspectRatio="none" fill="none" stroke="#00ee00" aria-hidden="true">
          <g strokeWidth="2">
            <path d="M205 40L215 38L213 58L216 70L206 78L190 80L200 72L208 66L204 54ZM253 62L266 60L272 68L293 66L290 72L270 74L256 74ZM296 19L302 28L292 40L302 34L308 44L318 52L312 34L316 22L304 22M290 20L296 26" />
            <path d="M733 42L790 26L842 20L780 34ZM526 82L545 80L559 78M1434 78L1442 80L1438 84M350 20L358 20" strokeWidth="3" />
            <path d="M1400 42L1404 28L1410 26L1406 42M1477 38L1481 42" />
          </g>
          <path d="M1394 21H1412V47H1394ZM1472 27H1484V50H1472Z" stroke="#f00" strokeWidth="5" />
        </svg>
      </div>
      <Gap place="left-[1665px] top-[724px] h-[638px] w-[10px]" note="top-[1000px]" />
      <div className="absolute top-[1300px] left-[1671px] h-[34px] w-1 bg-[#b8b8b8]" />

      {/* seventh screenshot: title strip and client area */}
      <div className="absolute top-[690px] left-[1662px] flex h-8 w-[592px] justify-end border-b border-[#8a8f8a] bg-white"><Controls /></div>
      <section className="absolute top-[723px] left-[1675px] h-[616px] w-[818px] overflow-hidden border-t border-[#d4d4d4] bg-white" aria-label="Car Facade">
        <Traces view={[30, 94, 1545, 1503]} marks={facade8} />
        <Watermark place="left-[455px] -bottom-[5px]" />
      </section>
      <div className="absolute top-[1339px] left-[1671px] flex h-[23px]">
        <div className="w-[15px] bg-[#ebebeb]" />
        <div className="ml-[30px] w-3 border-r border-[#707070] bg-[#ebebeb]" />
        <div className="ml-[11px] w-[24px] border-r border-l border-r-[#707070] border-l-[#1a80d0] bg-gradient-to-r from-[#c8c8c8] to-[#f0f0f0]" />
        <div className="ml-[138px] w-[21px] border-r border-[#707070] bg-gradient-to-r from-[#d0d0d0] to-[#f0f0f0]" />
      </div>
    </main>
  );
}
